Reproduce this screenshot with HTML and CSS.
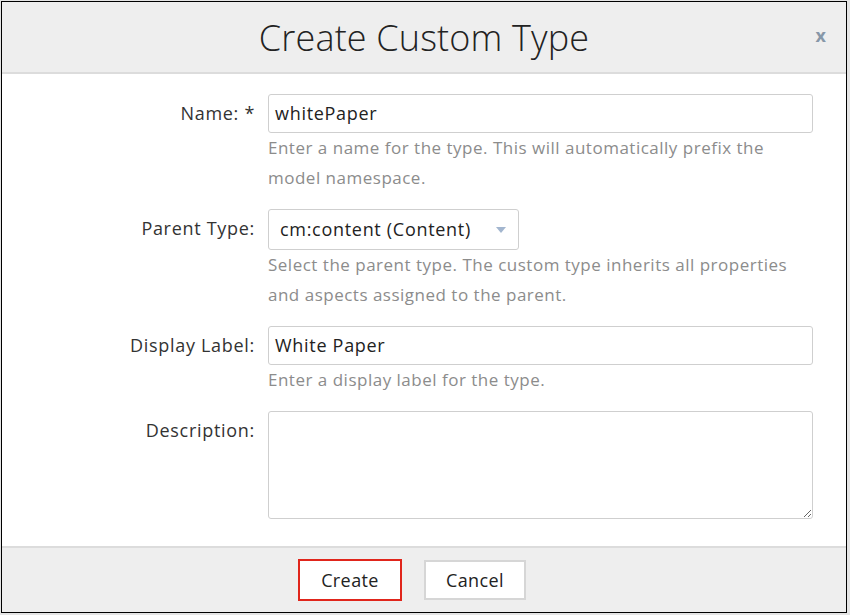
FILE: index.html
```html
<!DOCTYPE html>
<html>
<head>
<meta charset="utf-8">
<link rel="stylesheet" href="styles.css">
</head>
<body>
<div class="dialog">
  <div class="header">
    <h1 class="title">Create Custom Type</h1>
    <span class="close">x</span>
  </div>
  <div class="content">
    <div class="row">
      <label class="label">Name: *</label>
      <div class="field">
        <div class="input">whitePaper</div>
        <div class="help">Enter a name for the type. This will automatically prefix the model namespace.</div>
      </div>
    </div>
    <div class="row">
      <label class="label">Parent Type:</label>
      <div class="field">
        <div class="select"><span>cm:content (Content)</span><span class="arrow"></span></div>
        <div class="help">Select the parent type. The custom type inherits all properties and aspects assigned to the parent.</div>
      </div>
    </div>
    <div class="row">
      <label class="label">Display Label:</label>
      <div class="field">
        <div class="input">White Paper</div>
        <div class="help">Enter a display label for the type.</div>
      </div>
    </div>
    <div class="row">
      <label class="label">Description:</label>
      <div class="field">
        <textarea class="textarea"></textarea>
      </div>
    </div>
  </div>
  <div class="footer">
    <button class="btn btn-primary">Create</button>
    <button class="btn">Cancel</button>
  </div>
</div>
</body>
</html>
```

FILE: styles.css
```css
html, body {
  margin: 0;
  padding: 0;
}
body {
  background: #e4e4e4;
  font-family: "Open Sans", "Liberation Sans", sans-serif;
  width: 850px;
  height: 615px;
  overflow: hidden;
}
.dialog {
  margin: 1px 0 0 1px;
  width: 846px;
  height: 612px;
  box-sizing: border-box;
  border: 1.5px solid #000;
  background: #fff;
  display: flex;
  flex-direction: column;
}
.header {
  height: 70px;
  background: #eeeeee;
  border-bottom: 2px solid #dcdcdc;
  display: flex;
  align-items: center;
  justify-content: center;
  position: relative;
  flex-shrink: 0;
}
.title {
  margin: 0;
  font-weight: 300;
  font-size: 36px;
  color: #222;
  letter-spacing: 0.15px;
}
.close {
  position: absolute;
  right: 20px;
  top: 21px;
  font-size: 18px;
  font-weight: 700;
  color: #8797a8;
}
.content {
  flex: 1;
  padding: 20px 33px 0 0;
}
.row {
  display: grid;
  grid-template-columns: 253px 1fr;
  column-gap: 13px;
  margin-bottom: 16px;
}
.label {
  text-align: right;
  font-size: 18px;
  letter-spacing: 0.7px;
  color: #333;
  line-height: 38px;
}
.field {
  display: flex;
  flex-direction: column;
  align-items: flex-start;
}
.input {
  width: 100%;
  box-sizing: border-box;
  height: 39px;
  border: 1px solid #cfcfcf;
  border-radius: 3px;
  padding: 0 6px;
  font-size: 18px;
  letter-spacing: 0.7px;
  line-height: 37px;
  color: #222;
}
.select {
  width: 251px;
  height: 41px;
  box-sizing: border-box;
  border: 1px solid #cfcfcf;
  border-radius: 3px;
  padding: 0 7px 0 11px;
  font-size: 18px;
  letter-spacing: 0.7px;
  line-height: 39px;
  color: #222;
  display: flex;
  justify-content: space-between;
  align-items: center;
}
.arrow {
  width: 0;
  height: 0;
  border-left: 5px solid transparent;
  border-right: 5px solid transparent;
  border-top: 6px solid #a3b6cf;
  margin-right: 5px;
}
.help {
  font-size: 17px;
  letter-spacing: 0.5px;
  line-height: 30px;
  color: #8c8c8c;
  padding-right: 10px;
}
.textarea {
  width: 100%;
  box-sizing: border-box;
  height: 108px;
  border: 1px solid #cfcfcf;
  border-radius: 3px;
  margin: 0;
  font-family: inherit;
}
.footer {
  height: 64px;
  flex-shrink: 0;
  background: #eeeeee;
  border-top: 2px solid #dcdcdc;
  display: flex;
  align-items: center;
  justify-content: center;
  gap: 22px;
  padding-right: 24px;
}
.btn {
  font-family: "Open Sans", "Liberation Sans", sans-serif;
  font-size: 18px;
  letter-spacing: 0.4px;
  color: #222;
  background: #fff;
  border: 2px solid #d6d6d6;
  width: 102px;
  height: 40px;
  padding: 0;
}
.btn-primary {
  width: 104px;
  height: 42px;
  border-color: #e0251b;
}
```
